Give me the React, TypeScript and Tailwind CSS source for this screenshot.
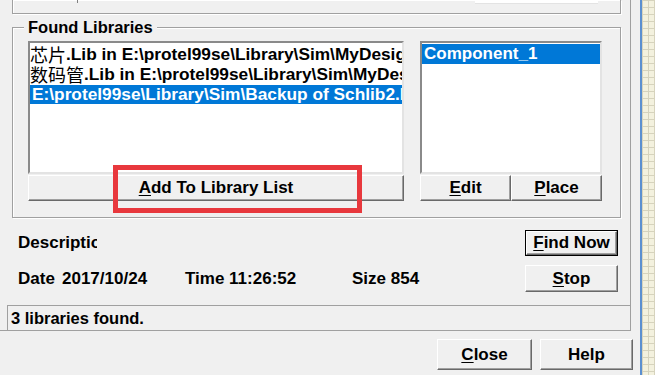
import type { ReactNode } from "react";

const raised =
  "flex items-center justify-center bg-[#f0f0f0] border border-t-white border-l-white border-r-[#696969] border-b-[#696969] shadow-[inset_-1px_-1px_0_#a0a0a0]";
const sunken =
  "border-2 border-t-[#8a8a8a] border-l-[#8a8a8a] border-r-[#e3e3e3] border-b-[#e3e3e3] bg-white overflow-hidden";
const etched = "border border-[#a0a0a0] shadow-[inset_1px_1px_0_#fff,1px_1px_0_#fff]";

function Btn({ children, className = "" }: { children: ReactNode; className?: string }) {
  return <div className={`${raised} ${className}`}>{children}</div>;
}

function Key({ k, rest }: { k: string; rest: string }) {
  return (
    <span>
      <span className="underline underline-offset-2 decoration-1">{k}</span>
      {rest}
    </span>
  );
}

const cjk = "font-['Noto_Sans_CJK_SC',sans-serif] font-normal text-[18px]";

export default function App() {
  return (
    <div className="relative flex h-[375px] w-[655px] overflow-hidden bg-[#f0f0f0] font-['Liberation_Sans',Arial,sans-serif] text-[17px] font-bold text-black">
      <div className="flex w-[640px] flex-col">
        {/* dialog panel */}
        <div className="flex h-[331px] w-[631px] flex-col border-r border-b border-[#a0a0a0]">
          {/* bottom of the previous group box */}
          <div className={`relative ml-[12px] h-[14px] w-[609px] border-t-0 ${etched}`}>
            <div className="absolute left-[64px] top-0 h-[3px] w-px bg-[#808080]" />
            <div className="absolute left-[462px] top-0 h-[4px] w-[123px] border-b border-[#e3e3e3] bg-white" />
          </div>

          {/* Found Libraries */}
          <div className={`relative ml-[12px] mt-[13px] h-[191px] w-[609px] ${etched}`}>
            <span className="absolute left-[11px] top-[-10px] bg-[#f0f0f0] px-[4px] text-[16.5px] leading-[18px]">
              Found Libraries
            </span>
            <div className="flex gap-[16px] pl-[15px] pt-[13px]">
              <div className="flex w-[376px] flex-col">
                <div className={`${sunken} h-[133px] pt-[1px] text-[17.3px]`}>
                  <div className="flex h-[20px] items-center whitespace-nowrap leading-[20px]">
                    <span className={cjk}>芯片</span>.Lib in E:\protel99se\Library\Sim\MyDesign.ddb
                  </div>
                  <div className="flex h-[20px] items-center whitespace-nowrap leading-[20px]">
                    <span className={cjk}>数码管</span>.Lib in E:\protel99se\Library\Sim\MyDesign.ddb
                  </div>
                  <div className="mt-[1px] flex h-[19px] items-center whitespace-nowrap bg-[#0078d7] pl-[2px] leading-[19px] text-white">
                    E:\protel99se\Library\Sim\Backup of Schlib2.Lib
                  </div>
                </div>
                <Btn className="mt-[1px] h-[26px]">
                  <Key k="A" rest="dd To Library List" />
                </Btn>
              </div>
              <div className="flex w-[182px] flex-col">
                <div className={`${sunken} h-[133px] pt-[1px]`}>
                  <div className="flex h-[20px] items-center whitespace-nowrap bg-[#0078d7] pl-[2px] leading-[20px] text-white">
                    Component_1
                  </div>
                </div>
                <div className="mt-[1px] flex h-[26px]">
                  <Btn className="w-[91px]">
                    <Key k="E" rest="dit" />
                  </Btn>
                  <Btn className="w-[91px]">
                    <Key k="P" rest="lace" />
                  </Btn>
                </div>
              </div>
            </div>
          </div>

          {/* description / date rows */}
          <div className="mt-[12px] flex h-[26px] items-center pl-[18px] pr-[12px]">
            <span className="w-[79px] overflow-hidden whitespace-nowrap">Description</span>
            <div className="ml-auto w-[93px] border border-black">
              <Btn className="h-[24px]">
                <Key k="F" rest="ind Now" />
              </Btn>
            </div>
          </div>
          <div className="mt-[9px] flex h-[27px] items-center pl-[18px] pr-[12px]">
            <span className="w-[44px]">Date</span>
            <span className="w-[123px]">2017/10/24</span>
            <span className="w-[167px]">Time 11:26:52</span>
            <span>Size 854</span>
            <Btn className="ml-auto h-[27px] w-[93px]">
              <Key k="S" rest="top" />
            </Btn>
          </div>

          {/* status */}
          <div className="ml-[7px] mt-[13px] flex h-[25px] items-center border-t border-l border-[#a0a0a0] pl-[3px] text-[16.5px] leading-[20px]">
            3 libraries found.
          </div>
        </div>

        {/* bottom buttons */}
        <div className="mt-[8px] flex justify-end gap-[8px] pr-[7px]">
          <Btn className="h-[31px] w-[95px]">
            <Key k="C" rest="lose" />
          </Btn>
          <Btn className="h-[31px] w-[93px]">Help</Btn>
        </div>
      </div>

      {/* background window grid */}
      <div className="h-full w-[15px] border-l-2 border-[#5b8fd0] bg-[#f3f1de] bg-[linear-gradient(#d6d3bd_1px,transparent_1px),linear-gradient(90deg,#d6d3bd_1px,transparent_1px)] bg-[length:6px_7px]" />

      {/* red highlight annotation */}
      <div className="pointer-events-none absolute left-[113px] top-[165px] h-[48px] w-[249px] border-[5px] border-[#e8383d]" />
    </div>
  );
}
